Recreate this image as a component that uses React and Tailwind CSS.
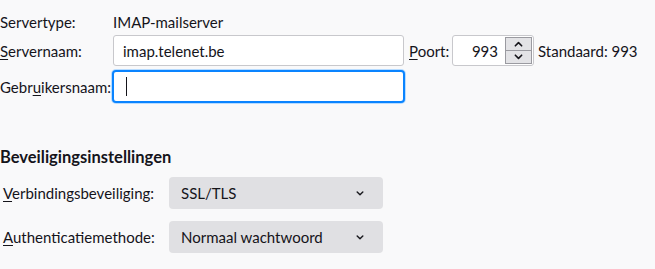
import React from 'react'

function Key({ before = '', k, after = '' }) {
  return (
    <span>
      {before}
      <span className="underline underline-offset-2">{k}</span>
      {after}
    </span>
  )
}

function Chevron({ up = false, className = '' }) {
  return (
    <svg viewBox="0 0 10 6" className={className} fill="none">
      <path
        d={up ? 'M1.5 5 L5 1.5 L8.5 5' : 'M1.5 1 L5 4.5 L8.5 1'}
        stroke="currentColor"
        strokeWidth="1.8"
        strokeLinecap="round"
        strokeLinejoin="round"
      />
    </svg>
  )
}

function Select({ value }) {
  return (
    <div className="flex items-center justify-between w-[214px] h-[32px] rounded-[4px] bg-[#e0e0e3] pl-[12px] pr-[19px]">
      <span>{value}</span>
      <Chevron className="w-[8px] h-[5px] text-[#1a1a1f]" />
    </div>
  )
}

export default function App() {
  return (
    <div
      className="w-[655px] h-[269px] bg-[#f9f9fa] text-[#15141a] text-[15px] leading-[20px] overflow-hidden whitespace-nowrap"
      style={{ fontFamily: 'Lato, "Noto Sans", sans-serif' }}
    >
      <div className="flex items-center h-[24px] mt-[10px]">
        <span className="w-[113px] shrink-0">Servertype:</span>
        <span>IMAP-mailserver</span>
      </div>

      <div className="flex items-center h-[31px] mt-[1px]">
        <span className="w-[113px] shrink-0">
          <Key k="S" after="ervernaam:" />
        </span>
        <div className="flex items-center shrink-0 w-[291px] h-[31px] bg-white border border-[#c8c8cc] rounded-[3px] px-[9px]">
          imap.telenet.be
        </div>
        <span className="ml-[5px] w-[43px] shrink-0">
          <Key k="P" after="oort:" />
        </span>
        <div className="flex items-center shrink-0 w-[82px] h-[31px] bg-white border border-[#c8c8cc] rounded-[3px]">
          <span className="w-[45px] text-right">993</span>
          <div className="ml-auto mr-[1px] flex flex-col w-[27px] h-[27px] border border-[#9a9aa0] bg-[#e3e3e6]">
            <div className="flex-1 flex items-center justify-center border-b border-[#9a9aa0]">
              <Chevron up className="w-[9px] h-[6px] text-[#15141a]" />
            </div>
            <div className="flex-1 flex items-center justify-center">
              <Chevron className="w-[9px] h-[6px] text-[#15141a]" />
            </div>
          </div>
        </div>
        <span className="ml-[4px]">Standaard: 993</span>
      </div>

      <div className="flex items-center h-[33px] mt-[4px]">
        <span className="w-[112px] shrink-0">
          <Key before="Gebr" k="u" after="ikersnaam:" />
        </span>
        <div className="flex items-center shrink-0 w-[293px] h-[33px] bg-white border-2 border-[#0a84ff] rounded-[4px] shadow-[0_0_0_1px_#b8dcff] px-[12px]">
          <span className="block w-[1px] h-[19px] bg-[#15141a]" />
        </div>
      </div>

      <div className="mt-[44px] font-bold text-[16.5px] h-[20px] flex items-center">
        Beveiligingsinstellingen
      </div>

      <div className="flex items-center h-[32px] mt-[10px]">
        <span className="w-[169px] shrink-0 pl-[3px]">
          <Key k="V" after="erbindingsbeveiliging:" />
        </span>
        <Select value="SSL/TLS" />
      </div>

      <div className="flex items-center h-[32px] mt-[12px]">
        <span className="w-[169px] shrink-0 pl-[3px]">
          <Key k="A" after="uthenticatiemethode:" />
        </span>
        <Select value="Normaal wachtwoord" />
      </div>
    </div>
  )
}
